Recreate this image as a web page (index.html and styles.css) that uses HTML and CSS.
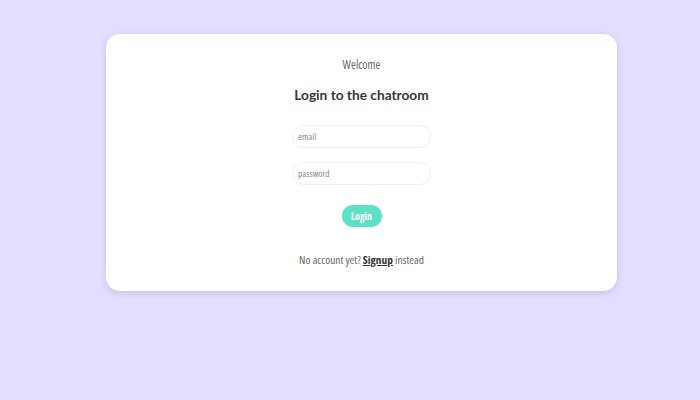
FILE: index.html
```html
<!DOCTYPE html>
<html>
<head>
<meta charset="utf-8">
<link rel="stylesheet" href="styles.css">
</head>
<body>
<main class="page">
  <section class="card">
    <p class="welcome">Welcome</p>
    <h1 class="title">Login to the chatroom</h1>
    <form class="form">
      <input class="field" type="text" placeholder="email">
      <input class="field" type="password" placeholder="password">
      <button class="btn" type="button">Login</button>
    </form>
    <p class="alt">No account yet? <a class="link" href="#">Signup</a> instead</p>
  </section>
</main>
</body>
</html>
```
FILE: styles.css
```css
html, body {
  margin: 0;
  padding: 0;
  background: #e1defe;
  height: 100%;
}
.page {
  padding: 34px 0 0 106px;
}
.card {
  width: 511px;
  box-sizing: border-box;
  background: #fff;
  border-radius: 14px;
  box-shadow: 0 2px 6px rgba(120, 110, 170, 0.25);
  padding: 22px 0 23px;
  display: flex;
  flex-direction: column;
  align-items: center;
  font-family: "Open Sans", sans-serif;
  font-stretch: 75%;
  font-weight: 400;
  color: #444;
}
.welcome {
  margin: 0;
  font-size: 11.8px;
  line-height: 16px;
  color: #666;
}
.title {
  margin: 12px 0 0;
  font-family: Lato, "Liberation Sans", sans-serif;
  font-stretch: normal;
  font-size: 13.7px;
  line-height: 22px;
  font-weight: 700;
  color: #383838;
}
.form {
  margin-top: 19px;
  display: flex;
  flex-direction: column;
  align-items: center;
}
.field {
  width: 139px;
  height: 23px;
  box-sizing: border-box;
  border: 1px solid #eeeeee;
  border-radius: 12px;
  padding: 0 5px;
  font-family: "Open Sans", sans-serif;
  font-stretch: 75%;
  font-weight: 400;
  font-size: 9.5px;
  color: #333;
  outline: none;
}
.field + .field {
  margin-top: 14px;
}
.field::placeholder {
  color: #888;
}
.btn {
  margin-top: 20px;
  width: 40px;
  height: 22px;
  border: none;
  border-radius: 11px;
  background: #5ce1c7;
  color: #fff;
  font-family: "Open Sans", sans-serif;
  font-stretch: 75%;
  font-weight: 700;
  font-size: 10px;
  padding: 0;
}
.alt {
  margin: 25px 0 0;
  font-size: 11.4px;
  line-height: 16px;
  color: #666;
}
.link {
  color: #333;
  font-weight: 700;
  text-decoration: underline;
}
```
